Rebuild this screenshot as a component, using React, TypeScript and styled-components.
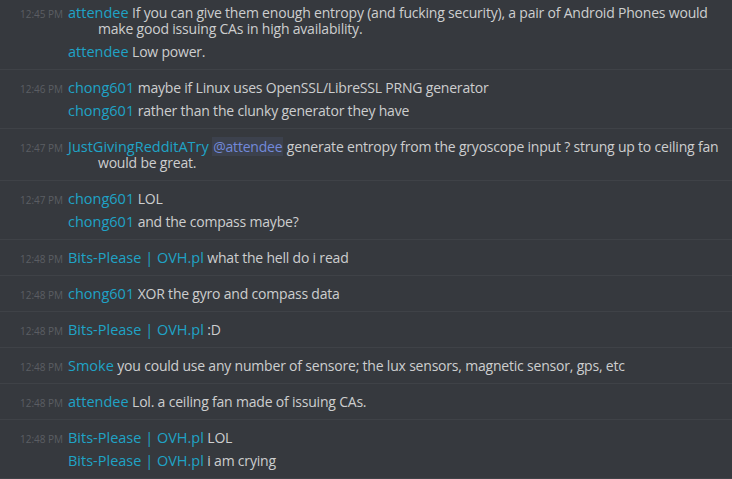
import React from 'react';
import styled, { createGlobalStyle } from 'styled-components';

type Part = { text: string; mention?: boolean };
interface IMessage {
  parts: Part[];
}
interface IGroup {
  time: string;
  author: string;
  messages: IMessage[];
}

const t = (text: string): IMessage => ({ parts: [{ text }] });

const groups: IGroup[] = [
  {
    time: '12:45 PM',
    author: 'attendee',
    messages: [
      t('If you can give them enough entropy (and fucking security), a pair of Android Phones would make good issuing CAs in high availability.'),
      t('Low power.'),
    ],
  },
  {
    time: '12:46 PM',
    author: 'chong601',
    messages: [t('maybe if Linux uses OpenSSL/LibreSSL PRNG generator'), t('rather than the clunky generator they have')],
  },
  {
    time: '12:47 PM',
    author: 'JustGivingRedditATry',
    messages: [
      {
        parts: [
          { text: '@attendee', mention: true },
          { text: ' generate entropy from the gryoscope input ? strung up to ceiling fan would be great.' },
        ],
      },
    ],
  },
  { time: '12:47 PM', author: 'chong601', messages: [t('LOL'), t('and the compass maybe?')] },
  { time: '12:48 PM', author: 'Bits-Please | OVH.pl', messages: [t('what the hell do i read')] },
  { time: '12:48 PM', author: 'chong601', messages: [t('XOR the gyro and compass data')] },
  { time: '12:48 PM', author: 'Bits-Please | OVH.pl', messages: [t(':D')] },
  {
    time: '12:48 PM',
    author: 'Smoke',
    messages: [t('you could use any number of sensore; the lux sensors, magnetic sensor, gps, etc')],
  },
  { time: '12:48 PM', author: 'attendee', messages: [t('Lol. a ceiling fan made of issuing CAs.')] },
  { time: '12:48 PM', author: 'Bits-Please | OVH.pl', messages: [t('LOL'), t('i am crying')] },
];

const Message = ({ time, author, message }: { time?: string; author: string; message: IMessage }) => {
  return (
    <MessageRow>
      <Gutter>{time && <Timestamp>{time}</Timestamp>}</Gutter>
      <Body>
        <Username>{author}</Username>{' '}
        {message.parts.map((part, i) =>
          part.mention ? <Mention key={i}>{part.text}</Mention> : <span key={i}>{part.text}</span>
        )}
      </Body>
    </MessageRow>
  );
};

const App = () => {
  return (
    <>
      <GlobalStyle />
      <Chat>
        {groups.map((group, gi) => (
          <Group key={gi}>
            {group.messages.map((message, mi) => (
              <Message key={mi} time={mi === 0 ? group.time : undefined} author={group.author} message={message} />
            ))}
          </Group>
        ))}
      </Chat>
    </>
  );
};

const GlobalStyle = createGlobalStyle`
  html, body {
    margin: 0;
    padding: 0;
    background: #36393e;
    overflow: hidden;
  }
`;

const Chat = styled.div`
  width: 732px;
  height: 479px;
  overflow: hidden;
  font-family: 'Open Sans', 'Noto Sans', sans-serif;
  font-size: 14px;
  letter-spacing: -0.2px;
  color: #cdcecf;
`;

const Group = styled.div`
  display: flex;
  flex-direction: column;
  gap: 7px;
  padding: 10px 0 9px;
  border-bottom: 1px solid #3f4247;
  &:first-child {
    padding-top: 5px;
  }
`;

const MessageRow = styled.div`
  display: flex;
  align-items: flex-start;
`;

const Gutter = styled.div`
  flex: 0 0 48px;
  padding-left: 20px;
  height: 16px;
  line-height: 16px;
`;

const Timestamp = styled.span`
  font-size: 10px;
  line-height: 10px;
  letter-spacing: 0;
  color: #5b5e63;
  white-space: nowrap;
`;

const Body = styled.div`
  width: 624px;
  padding-left: 30px;
  text-indent: -30px;
  line-height: 16px;
`;

const Username = styled.span`
  color: #1fa3c6;
  font-size: 14.5px;
  line-height: 10px;
  letter-spacing: 0;
`;

const Mention = styled.span`
  color: #7289da;
  background: rgba(114, 137, 218, 0.1);
  padding: 0 1px;
`;

export default App;
